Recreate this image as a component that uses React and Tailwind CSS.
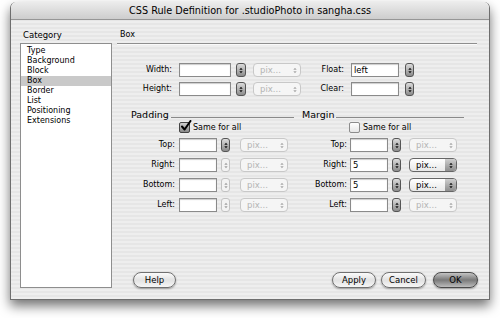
import React from "react";

const stripes =
  "bg-[repeating-linear-gradient(0deg,#eeeeee_0px,#eeeeee_2px,#e6e6e6_2px,#e6e6e6_4px)]";

function Arrows({ color, w = 5, h = 8 }) {
  return (
    <svg width={w} height={h} viewBox="0 0 5 8">
      <path d="M2.5 0.6 L4.6 3.2 H0.4Z M2.5 7.4 L4.6 4.8 H0.4Z" fill={color} />
    </svg>
  );
}

function Stepper({ active, className = "" }) {
  return (
    <div
      className={`w-[9px] h-[14px] shrink-0 rounded-[3px] border flex items-center justify-center ${
        active
          ? "border-[#555555] bg-gradient-to-b from-[#dcdcdc] to-[#8c8c8c]"
          : "border-[#c2c2c2] bg-[#f3f3f3]"
      } ${className}`}
    >
      <Arrows color={active ? "#111111" : "#a0a0a0"} w={4} h={7} />
    </div>
  );
}

function Dropdown({ enabled, className = "" }) {
  return (
    <div
      className={`w-[48px] h-[14px] shrink-0 rounded-[4px] border flex items-stretch overflow-hidden ${
        enabled
          ? "border-[#666666] bg-gradient-to-b from-white to-[#e8e8e8]"
          : "border-[#c8c8c8] bg-[#f5f5f5]"
      } ${className}`}
    >
      <span
        className={`flex-1 pl-[6px] text-[8.5px] leading-[12px] ${
          enabled ? "text-black" : "text-[#b4b4b4]"
        }`}
      >
        pix...
      </span>
      <span
        className={`w-[11px] flex items-center justify-center ${
          enabled ? "bg-gradient-to-b from-[#cfcfcf] to-[#8e8e8e]" : ""
        }`}
      >
        <Arrows color={enabled ? "#111111" : "#a8a8a8"} w={4} h={7} />
      </span>
    </div>
  );
}

function Input({ value = "", className = "" }) {
  return (
    <div
      className={`h-[14px] shrink-0 bg-white border border-[#8a8a8a] shadow-[inset_0_1px_1px_rgba(0,0,0,0.2)] pl-[2px] text-[8.5px] leading-[12px] text-black ${className}`}
    >
      {value}
    </div>
  );
}

function Checkbox({ checked }) {
  return (
    <div
      className={`w-[11px] h-[11px] rounded-[2px] border relative ${
        checked
          ? "border-[#444444] bg-gradient-to-b from-[#d0d0d0] to-[#8a8a8a]"
          : "border-[#8c8c8c] bg-gradient-to-b from-white to-[#e6e6e6]"
      }`}
    >
      {checked && (
        <svg
          width="12"
          height="12"
          viewBox="0 0 12 12"
          className="absolute left-[0px] top-[-3px]"
        >
          <path
            d="M2 6.5 L4.6 9.5 L10.5 1"
            fill="none"
            stroke="#000"
            strokeWidth="2"
            strokeLinecap="round"
            strokeLinejoin="round"
          />
        </svg>
      )}
    </div>
  );
}

function Button({ children, def, className = "" }) {
  return (
    <div
      className={`h-[16px] rounded-full border flex items-center justify-center text-[8.5px] text-black shadow-[0_1px_2px_rgba(0,0,0,0.35)] ${
        def
          ? "border-[#4a4a4a] bg-gradient-to-b from-[#c4c4c4] via-[#7a7a7a] to-[#bcbcbc]"
          : "border-[#707070] bg-gradient-to-b from-[#fbfbfb] via-[#e2e2e2] to-[#f6f6f6]"
      } ${className}`}
    >
      {children}
    </div>
  );
}

function SideRow({ label, value, stepActive, ddEnabled, side }) {
  const isPad = side === "pad";
  return (
    <div className="flex items-center h-[14px]">
      <span
        className={`${isPad ? "w-[44px]" : "w-[45px]"} text-right text-[8px] leading-[14px]`}
      >
        {label}
      </span>
      <Input value={value} className={`w-[38px] ${isPad ? "ml-[4px]" : "ml-[3px]"}`} />
      <Stepper active={stepActive} className="ml-[4px]" />
      <Dropdown enabled={ddEnabled} className={isPad ? "ml-[10px]" : "ml-[8px]"} />
    </div>
  );
}

export default function App() {
  const cats = [
    "Type",
    "Background",
    "Block",
    "Box",
    "Border",
    "List",
    "Positioning",
    "Extensions",
  ];
  return (
    <div className="w-[500px] h-[318px] bg-white pt-[2px] pl-[10px] overflow-hidden font-['DejaVu_Sans',sans-serif] text-black">
      <div className="w-[480px] h-[298px] flex flex-col rounded-t-[6px] border-x border-b border-[#6e6e6e] shadow-[0_6px_12px_rgba(0,0,0,0.55)]">
        {/* Title bar */}
        <div className="h-[18px] shrink-0 rounded-t-[6px] bg-gradient-to-b from-[#ececec] to-[#cdcdcd] border-b border-[#969696] text-center text-[9.7px] leading-[18px]">
          CSS Rule Definition for .studioPhoto in sangha.css
        </div>
        {/* Body */}
        <div className={`flex-1 flex pl-[9px] ${stripes}`}>
          {/* Left column */}
          <div className="w-[92px] flex flex-col">
            <div className="mt-[9px] h-[12px] leading-[12px] text-[8.5px] pl-[3px]">
              Category
            </div>
            <div className="mt-[2px] h-[245px] bg-white border border-[#8e8e8e] pt-[2px]">
              {cats.map((c) => (
                <div
                  key={c}
                  className={`h-[10px] leading-[10px] text-[8px] pl-[6px] ${
                    c === "Box" ? "bg-[#c9c9c9]" : ""
                  }`}
                >
                  {c}
                </div>
              ))}
            </div>
          </div>
          {/* Right column */}
          <div className="ml-[5px] w-[363px] flex flex-col">
            <div className="mt-[9px] h-[12px] leading-[12px] text-[8px] pl-[3px]">Box</div>
            <div className="mt-[2px] w-[360px] h-[2px] border-t border-[#8e8e8e] border-b border-b-[#fafafa]" />

            {/* Box rows */}
            <div className="mt-[18px] flex flex-col gap-[5px]">
              <div className="flex items-center h-[14px]">
                <span className="w-[55px] text-right text-[8px] leading-[14px]">Width:</span>
                <Input className="w-[52px] ml-[7px]" />
                <Stepper active className="ml-[5px] w-[10px]" />
                <Dropdown className="ml-[7px] w-[47px]" />
                <span className="w-[43px] text-right text-[8px] leading-[14px]">Float:</span>
                <Input value="left" className="w-[48px] ml-[7px]" />
                <Stepper active className="ml-[6px]" />
              </div>
              <div className="flex items-center h-[14px]">
                <span className="w-[55px] text-right text-[8px] leading-[14px]">Height:</span>
                <Input className="w-[52px] ml-[7px]" />
                <Stepper active className="ml-[5px] w-[10px]" />
                <Dropdown className="ml-[7px] w-[47px]" />
                <span className="w-[43px] text-right text-[8px] leading-[14px]">Clear:</span>
                <Input className="w-[48px] ml-[7px]" />
                <Stepper active className="ml-[6px]" />
              </div>
            </div>

            {/* Padding / Margin */}
            <div className="mt-[13px] flex pl-[14px] gap-[8px]">
              {/* Padding */}
              <div className="w-[163px] flex flex-col">
                <div className="h-[12px] flex items-center">
                  <span className="text-[9.5px] leading-[12px]">Padding</span>
                  <div className="ml-[2px] mt-[4px] flex-1 h-px bg-[#8a8a8a]" />
                </div>
                <div className="mt-[1px] h-[11px] flex items-center pl-[48px]">
                  <Checkbox checked />
                  <span className="ml-[3px] text-[8px] leading-[11px]">Same for all</span>
                </div>
                <div className="mt-[5px] flex flex-col gap-[6px]">
                  <SideRow side="pad" label="Top:" stepActive />
                  <SideRow side="pad" label="Right:" />
                  <SideRow side="pad" label="Bottom:" />
                  <SideRow side="pad" label="Left:" />
                </div>
              </div>
              {/* Margin */}
              <div className="w-[162px] flex flex-col">
                <div className="h-[12px] flex items-center">
                  <span className="text-[9.5px] leading-[12px]">Margin</span>
                  <div className="ml-[2px] mt-[4px] flex-1 h-px bg-[#8a8a8a]" />
                </div>
                <div className="mt-[1px] h-[11px] flex items-center pl-[47px]">
                  <Checkbox />
                  <span className="ml-[3px] text-[8px] leading-[11px]">Same for all</span>
                </div>
                <div className="mt-[5px] flex flex-col gap-[6px]">
                  <SideRow side="mar" label="Top:" stepActive />
                  <SideRow side="mar" label="Right:" value="5" stepActive ddEnabled />
                  <SideRow side="mar" label="Bottom:" value="5" stepActive ddEnabled />
                  <SideRow side="mar" label="Left:" stepActive />
                </div>
              </div>
            </div>

            {/* Buttons */}
            <div className="mt-auto mb-[11px] flex items-center pl-[16px] pr-[2px]">
              <Button className="w-[43px]">Help</Button>
              <div className="flex-1" />
              <Button className="w-[44px]">Apply</Button>
              <Button className="w-[45px] ml-[5px]">Cancel</Button>
              <Button def className="w-[45px] ml-[7px]">
                OK
              </Button>
            </div>
          </div>
        </div>
      </div>
    </div>
  );
}
